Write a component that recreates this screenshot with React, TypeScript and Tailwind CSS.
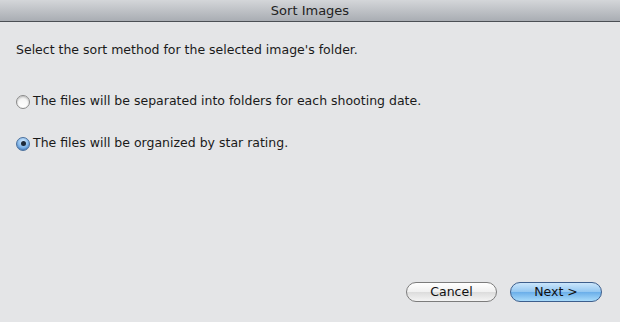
import React from 'react';

const font = { fontFamily: '"DejaVu Sans", "Lucida Grande", sans-serif' };

const Radio: React.FC<{ checked?: boolean; label: string }> = ({ checked, label }) => (
  <label className="flex items-center gap-[3px] h-[20px]">
    {checked ? (
      <span className="w-[14px] h-[14px] rounded-full border border-[#4a6f9c] bg-[radial-gradient(circle_at_50%_30%,#d6ecff_0%,#7fb4e8_55%,#3d7fd0_100%)] flex items-center justify-center shadow-[inset_0_-1px_1px_rgba(0,0,0,0.15)]">
        <span className="w-[5px] h-[5px] rounded-full bg-[#1c2a3a]" />
      </span>
    ) : (
      <span className="w-[14px] h-[14px] rounded-full border border-[#8a8a8a] bg-[linear-gradient(#f2f2f2,#ffffff)] shadow-[inset_0_1px_2px_rgba(0,0,0,0.25)]" />
    )}
    <span className="text-[12.5px] text-[#1a1a1a]">{label}</span>
  </label>
);

export default function App() {
  return (
    <div className="w-[620px] h-[322px] bg-[#e4e5e7] flex flex-col overflow-hidden" style={font}>
      {/* Title bar */}
      <div className="h-[22px] shrink-0 bg-[linear-gradient(#d4d6d9,#a9adb3)] border-b border-[#4b4f55] flex items-center justify-center">
        <span className="text-[13px] text-[#222]">Sort Images</span>
      </div>

      <div className="flex-1 flex flex-col pl-[16px] pr-[18px]">
        <p className="mt-[19px] text-[12.5px] text-[#1a1a1a]">
          Select the sort method for the selected image's folder.
        </p>

        <div className="mt-[32px] flex flex-col gap-[22px]">
          <Radio label="The files will be separated into folders for each shooting date." />
          <Radio checked label="The files will be organized by star rating." />
        </div>

        <div className="mt-auto mb-[20px] flex justify-end gap-[13px]">
          <button className="w-[91px] h-[20px] rounded-full border border-[#7c7c7c] bg-[linear-gradient(#ffffff_0%,#f0f0f0_50%,#dcdcdc_51%,#f4f4f4_100%)] text-[12.5px] text-[#111] leading-none">
            Cancel
          </button>
          <button className="w-[92px] h-[20px] rounded-full border border-[#3d5e8c] bg-[linear-gradient(#cbe6fb_0%,#92c6f1_50%,#6aaee9_51%,#a8dbfb_100%)] text-[12.5px] text-[#111] leading-none">
            Next &gt;
          </button>
        </div>
      </div>
    </div>
  );
}
